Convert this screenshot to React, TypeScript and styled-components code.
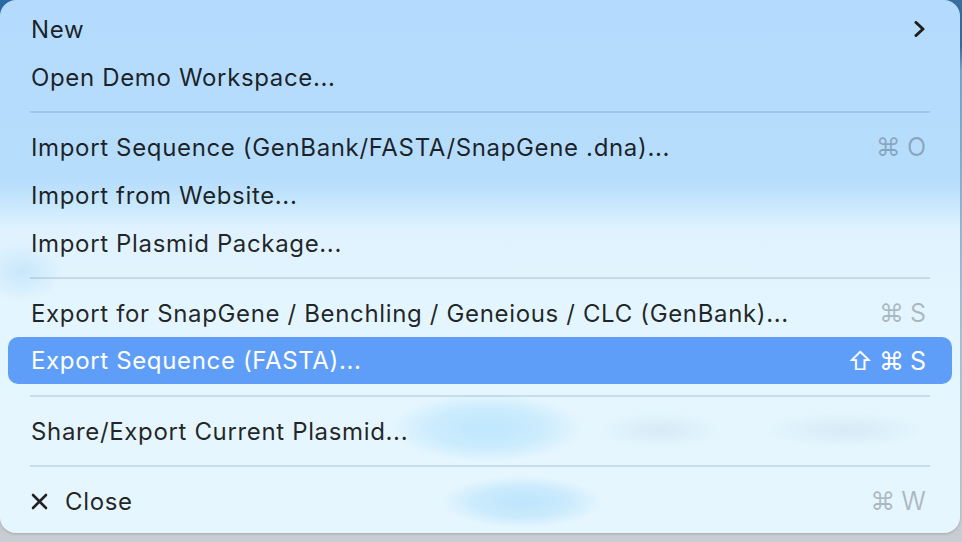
import React from "react";
import styled, { createGlobalStyle } from "styled-components";

const Global = createGlobalStyle`
  html, body {
    margin: 0;
    padding: 0;
    width: 962px;
    height: 542px;
    overflow: hidden;
  }
  body {
    background:
      radial-gradient(ellipse 40px 40px at 0px 0px, #2c6aa6 0%, #2c6aa6 60%, transparent 100%),
      radial-gradient(ellipse 40px 60px at 962px 10px, #3a6e9c 0%, #3a6e9c 60%, transparent 100%),
      linear-gradient(180deg, #6f9fc8 0px, #a9c7de 300px, #c3cbd2 480px, #c8cdd2 542px);
    font-family: Inter, "Noto Sans", "DejaVu Sans", sans-serif;
  }
`;

const Panel = styled.div`
  box-sizing: border-box;
  width: 960px;
  height: 533px;
  border-radius: 16px;
  padding: 5px 8px 8px;
  display: flex;
  flex-direction: column;
  overflow: hidden;
  box-shadow: 0 1px 3px rgba(0, 0, 0, 0.18);
  background:
    radial-gradient(ellipse 95px 34px at 487px 428px, rgba(188, 230, 253, 0.95) 0%, rgba(188, 230, 253, 0.6) 60%, transparent 100%),
    radial-gradient(ellipse 80px 26px at 522px 502px, rgba(186, 228, 252, 0.95) 0%, rgba(186, 228, 252, 0.6) 60%, transparent 100%),
    radial-gradient(ellipse 60px 18px at 660px 430px, rgba(205, 226, 240, 0.6) 0%, transparent 100%),
    radial-gradient(ellipse 80px 18px at 845px 430px, rgba(205, 226, 240, 0.6) 0%, transparent 100%),
    radial-gradient(ellipse 40px 30px at 22px 272px, rgba(190, 225, 250, 0.7) 0%, transparent 100%),
    linear-gradient(180deg, #b4dbfd 0px, #b7ddfc 180px, #c8e8fd 205px, #dff2fe 228px, #e3f5fe 300px, #e6f6fe 533px);
`;

const Row = styled.div<{ $active?: boolean }>`
  flex: 0 0 auto;
  height: ${(p) => (p.$active ? "47px" : "48px")};
  margin-bottom: ${(p) => (p.$active ? "1px" : "0")};
  box-sizing: border-box;
  padding: 0 26px 0 23px;
  display: flex;
  align-items: center;
  border-radius: 10px;
  background: ${(p) => (p.$active ? "#5e9ef8" : "transparent")};
  color: ${(p) => (p.$active ? "#ffffff" : "rgba(0, 0, 0, 0.86)")};
  font-size: 24px;
  letter-spacing: 0.65px;
  white-space: nowrap;
`;

const Label = styled.span`
  flex: 1 1 auto;
  display: flex;
  align-items: center;
  gap: 17px;
`;

const Shortcut = styled.span<{ $active?: boolean }>`
  display: flex;
  align-items: center;
  gap: 6px;
  color: ${(p) => (p.$active ? "#ffffff" : "rgba(0, 0, 0, 0.25)")};
  font-size: 25px;
  letter-spacing: 0;
`;

const Separator = styled.div`
  flex: 0 0 auto;
  height: 22px;
  display: flex;
  align-items: center;
  padding: 0 22px;
  &::after {
    content: "";
    display: block;
    height: 2px;
    width: 100%;
    background: rgba(0, 40, 80, 0.12);
  }
`;

const Chevron = () => (
  <svg width="12" height="16" viewBox="0 0 12 16" style={{ display: "block" }}>
    <polyline points="2,1.5 9,8 2,14.5" fill="none" stroke="#1e1e1e" strokeWidth="3" strokeLinecap="round" strokeLinejoin="round" />
  </svg>
);

const CloseIcon = () => (
  <svg width="17" height="17" viewBox="0 0 17 17" style={{ display: "block" }}>
    <path d="M2 2 L15 15 M15 2 L2 15" stroke="#222" strokeWidth="2.6" strokeLinecap="round" />
  </svg>
);

const Keys = ({ keys, active }: { keys: string[]; active?: boolean }) => (
  <Shortcut $active={active}>
    {keys.map((k, i) => (
      <span key={i}>{k}</span>
    ))}
  </Shortcut>
);

export default function App() {
  return (
    <>
      <Global />
      <Panel>
        <Row>
          <Label>New</Label>
          <Chevron />
        </Row>
        <Row>
          <Label>Open Demo Workspace...</Label>
        </Row>
        <Separator />
        <Row>
          <Label>Import Sequence (GenBank/FASTA/SnapGene .dna)...</Label>
          <Keys keys={["⌘", "O"]} />
        </Row>
        <Row>
          <Label>Import from Website...</Label>
        </Row>
        <Row>
          <Label>Import Plasmid Package...</Label>
        </Row>
        <Separator />
        <Row>
          <Label>Export for SnapGene / Benchling / Geneious / CLC (GenBank)...</Label>
          <Keys keys={["⌘", "S"]} />
        </Row>
        <Row $active>
          <Label>Export Sequence (FASTA)...</Label>
          <Keys keys={["⇧", "⌘", "S"]} active />
        </Row>
        <Separator />
        <Row>
          <Label>Share/Export Current Plasmid...</Label>
        </Row>
        <Separator />
        <Row>
          <Label>
            <CloseIcon />
            Close
          </Label>
          <Keys keys={["⌘", "W"]} />
        </Row>
      </Panel>
    </>
  );
}
